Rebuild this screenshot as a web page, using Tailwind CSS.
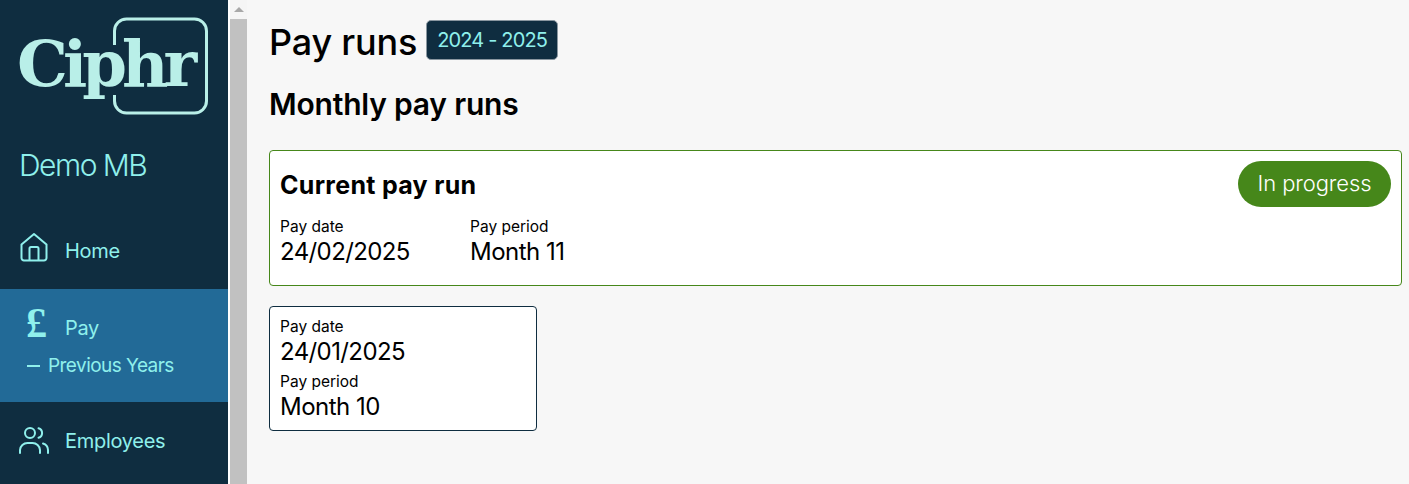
<!DOCTYPE html>
<html lang="en">
<head>
<meta charset="utf-8">
<title>Pay runs</title>
<script src="https://cdn.jsdelivr.net/npm/@tailwindcss/browser@4"></script>
</head>
<body class="m-0 overflow-hidden font-['Inter','Noto_Sans',sans-serif] text-black">
<div class="flex h-[484px] w-[1409px] overflow-hidden bg-[#f7f7f7]">
  <aside class="flex w-[228px] shrink-0 flex-col bg-[#0f2d40] text-[#8ff0ec]">
    <div class="relative h-[135px]">
      <svg class="absolute left-[112px] top-[17px]" width="98" height="98" viewBox="0 0 98 98" fill="none" stroke="#b9efe8" stroke-width="3"><path d="M2.500 28V14A12 12 0 0 1 14.500 2H82.500A12 12 0 0 1 94.500 14V84A12 12 0 0 1 82.500 96H14.500A12 12 0 0 1 2.500 84V78"/></svg>
      <span class="absolute left-[17px] top-[24px] font-['DejaVu_Serif',serif] text-[64px] leading-[80px] font-bold tracking-[-5px] text-[#b9efe8]">Ciphr</span>
    </div>
    <div class="h-[64px] pl-[19px] pt-[12px] text-[30px] leading-[36px] font-light tracking-[-1.5px]">Demo MB</div>
    <a class="flex h-[90px] items-start gap-[16px] pl-[19px] pt-[33px]">
      <svg width="30" height="30" viewBox="0 0 30 30" fill="none" stroke="#8ff0ec" stroke-width="2" stroke-linejoin="round"><path d="M2.500 12.500 15 2 27.500 12.500V26A2.500 2.500 0 0 1 25 28.500H5A2.500 2.500 0 0 1 2.500 26Z"/><path d="M10.500 28.500V16.500A1.500 1.500 0 0 1 12 15H18A1.500 1.500 0 0 1 19.500 16.500V28.500"/></svg>
      <span class="mt-[5px] text-[20px] leading-[28px] tracking-[-0.3px]">Home</span>
    </a>
    <div class="h-[113px] bg-[#226a97] pl-[19px]">
      <div class="flex h-[64px] items-center gap-[16px] pt-[9px]">
        <span class="-mt-[6px] w-[30px] pl-[5px] text-center font-['Liberation_Serif',serif] text-[42px] leading-[36px] font-bold">£</span>
        <span class="mt-[4px] text-[20px] leading-[28px] tracking-[-0.3px]">Pay</span>
      </div>
      <div class="mt-[1px] flex items-center gap-[8px] pl-[8px] text-[19px] leading-[24px] tracking-[-0.55px]"><span class="h-[2px] w-[13px] bg-[#8ff0ec]"></span><span>Previous Years</span></div>
    </div>
    <a class="flex h-[78px] items-center gap-[16px] pb-[2px] pl-[19px]">
      <svg width="30" height="30" viewBox="0 0 30 30" fill="none" stroke="#8ff0ec" stroke-width="2" stroke-linecap="round"><circle cx="11" cy="8" r="5"/><path d="M1 28V25A7.500 7.500 0 0 1 8.500 18H13.500A7.500 7.500 0 0 1 21 25V28"/><path d="M19.500 3.200A5 5 0 0 1 19.500 12.800"/><path d="M24 18.500A7 7 0 0 1 29 25V28"/></svg>
      <span class="mt-[1px] text-[20px] leading-[28px] tracking-[-0.3px]">Employees</span>
    </a>
  </aside>
  <div class="flex w-[19px] shrink-0 flex-col items-center border-l-2 border-white bg-[#f5f5f5]">
    <div class="flex h-[19px] w-full items-start justify-center pt-[7px]"><div class="h-0 w-0 border-x-[5px] border-b-[5px] border-x-transparent border-b-[#a8a8a8]"></div></div>
    <div class="w-full flex-1 bg-[#c1c1c1]"></div>
  </div>
  <main class="min-w-0 flex-1 pl-[22px] pr-[7px]">
    <div class="flex h-[84px] items-start pt-[20px]">
      <h1 class="text-[36px] leading-[45px] font-medium tracking-[-0.2px]">Pay runs</h1>
      <span class="ml-[9px] flex h-[40px] w-[132px] items-center justify-center rounded-[5px] border border-[#8a97a0] bg-[#0f2d40] text-[20px] leading-none tracking-[-0.85px] text-[#8ff0ec]">2024 - 2025</span>
    </div>
    <h2 class="text-[30px] leading-[40px] font-semibold tracking-[-0.2px]">Monthly pay runs</h2>
    <section class="mt-[26px] h-[136px] rounded-[4px] border border-[#46871a] bg-white px-[10px] pt-[10px]">
      <div class="flex h-[46px] items-center justify-between">
        <h3 class="mt-[2px] text-[25px] leading-[32px] font-bold tracking-[0.3px]">Current pay run</h3>
        <span class="flex h-[46px] w-[153px] items-center justify-center rounded-full bg-[#46871a] pb-[2px] text-[22px] leading-none font-light tracking-[-0.1px] text-white">In progress</span>
      </div>
      <div class="mt-[10px] flex">
        <div class="w-[190px]">
          <div class="text-[15.500px] leading-[20px] tracking-[0px]">Pay date</div>
          <div class="text-[24px] leading-[30px] tracking-[-0.6px]">24/02/2025</div>
        </div>
        <div>
          <div class="text-[15.500px] leading-[20px] tracking-[0px]">Pay period</div>
          <div class="text-[24px] leading-[30px] tracking-[-0.5px]">Month 11</div>
        </div>
      </div>
    </section>
    <section class="mt-[20px] h-[125px] w-[268px] rounded-[4px] border border-[#0f2d40] bg-white px-[10px] pt-[10px]">
      <div class="text-[15.500px] leading-[20px] tracking-[0px]">Pay date</div>
      <div class="text-[24px] leading-[30px] tracking-[-0.6px]">24/01/2025</div>
      <div class="mt-[5px] text-[15.500px] leading-[20px] tracking-[0px]">Pay period</div>
      <div class="text-[24px] leading-[30px] tracking-[-0.5px]">Month 10</div>
    </section>
  </main>
</div>
</body>
</html>
